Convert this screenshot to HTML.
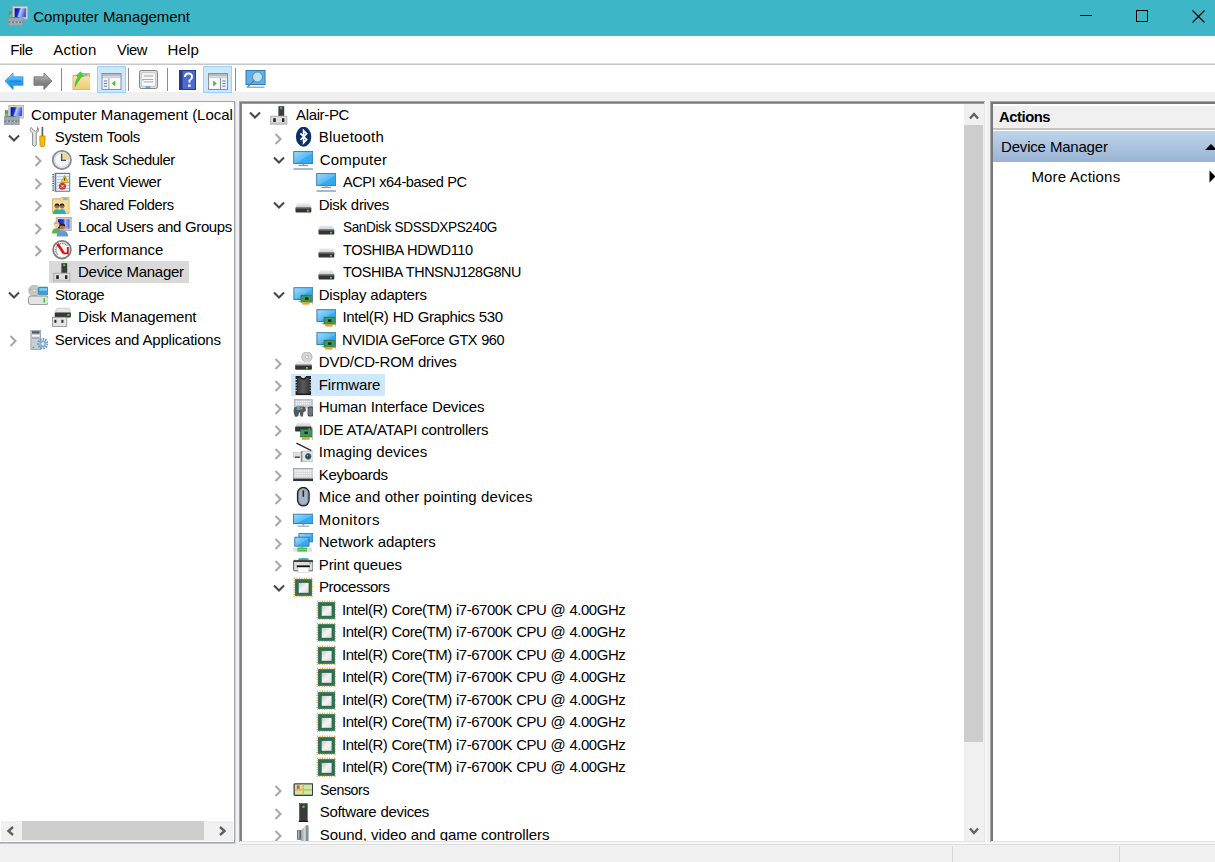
<!DOCTYPE html>
<html><head><meta charset="utf-8"><title>Computer Management</title>
<style>
html,body{margin:0;padding:0}
body{width:1215px;height:862px;overflow:hidden;position:relative;background:#f0f0f0;font-family:"Liberation Sans",sans-serif}
.a{position:absolute}
.t{position:absolute;font-size:15px;line-height:20px;white-space:nowrap;color:#000;font-family:"Liberation Sans",sans-serif}
.ic{position:absolute;overflow:visible}
.clip{position:absolute;overflow:hidden}
</style></head><body>
<svg width="0" height="0" style="position:absolute"><symbol id="i-cm" viewBox="0 0 20 20"><defs><linearGradient id="gcm" x1="0" y1="0" x2="1" y2="0.25"><stop offset="0" stop-color="#0008b0"/><stop offset="0.4" stop-color="#1830d8"/><stop offset="0.55" stop-color="#c0ccf8"/><stop offset="1" stop-color="#3858e8"/></linearGradient></defs>
<rect x="0.8" y="5.2" width="3.4" height="8" fill="#7c8486"/><rect x="1.3" y="8.6" width="2.4" height="2.2" fill="#50e050"/>
<rect x="4.8" y="0.4" width="15" height="12.6" fill="#dcd8c4" stroke="#b4b09c" stroke-width="0.8"/><rect x="6.6" y="2.2" width="11.5" height="9" fill="url(#gcm)"/>
<path d="M4 12.3 Q8 10.2 12 12.3" stroke="#303030" fill="none" stroke-width="1.2"/>
<rect x="0.2" y="11.8" width="15" height="8" fill="#9ca8b0" stroke="#86929a" stroke-width="0.6"/><rect x="0.6" y="15.4" width="14.2" height="1.6" fill="#6e7a82"/><path d="M2.5 16.2H14" stroke="#e8eef0" stroke-width="1" stroke-dasharray="1.4 2.2"/></symbol><symbol id="i-systools" viewBox="0 0 20 20"><path d="M3.2 0.4 C1.6 1.8 1.8 4.8 4.6 5.8 L4.6 18.2 Q6.4 20.2 8.2 18.2 L8.2 5.8 C11 4.8 11.2 1.8 9.6 0.4 L9.4 3.2 L7.4 4.4 L5.4 3.2Z" fill="#e6e6e6" stroke="#7c7c7c" stroke-width="0.9"/>
<rect x="13.6" y="0" width="1.6" height="9.5" fill="#5a5a5a"/><path d="M11.8 9 H17 V11.6 Q17.4 13 16.8 14 V18.2 Q16.8 19.8 14.4 19.8 Q12 19.8 12 18.2 V14 Q11.4 13 11.8 11.6Z" fill="#f4bc10" stroke="#c08800" stroke-width="0.8"/></symbol><symbol id="i-clock" viewBox="0 0 20 20"><circle cx="9.9" cy="10" r="9.1" fill="#eef2f6" stroke="#8c8c8c" stroke-width="1.8"/><circle cx="9.9" cy="10" r="7.2" fill="#f4f6fa" stroke="#c4ccd4" stroke-width="0.7"/><path d="M9.9 10 V2.8 A7.2 7.2 0 0 1 17.1 10Z" fill="#f0d490"/><path d="M9.6 3.8 V10.4 H14" stroke="#405068" stroke-width="1.3" fill="none"/></symbol><symbol id="i-event" viewBox="0 0 20 20"><rect x="2.6" y="0.8" width="15.6" height="19" fill="#5878b8"/><rect x="4.2" y="2" width="13" height="16.8" fill="#e8f0f8"/><path d="M4.5 4.5H17M4.5 7.5H17M4.5 10.5H17M4.5 13.5H17M4.5 16.5H17" stroke="#b8c8dc" stroke-width="0.9"/><path d="M1.2 2V19" stroke="#505050" stroke-width="1.6" stroke-dasharray="1 0.8"/><path d="M12.7 3.4 L16.6 10.6 H8.8Z" fill="#f4cc10" stroke="#b89000" stroke-width="0.6"/><rect x="12.2" y="5.6" width="1" height="3" fill="#333"/><circle cx="10.4" cy="14.2" r="3.5" fill="#d83030"/><path d="M9 12.8 L11.8 15.6 M11.8 12.8 L9 15.6" stroke="#fff" stroke-width="0.9"/></symbol><symbol id="i-shared" viewBox="0 0 20 20"><path d="M0.6 3.8 H8 L9.6 2.4 H17 V18.4 H0.6Z" fill="#f2d488" stroke="#c8a858" stroke-width="0.8"/><rect x="11" y="3.2" width="4.5" height="1.6" fill="#68b0e8"/><rect x="1.4" y="5.4" width="15" height="12.4" fill="#f6dc9c"/><circle cx="5" cy="11.2" r="2.4" fill="#a07050"/><path d="M2.6 11 Q2.6 8.4 5 8.4 Q7.4 8.4 7.4 11 Q5 9.6 2.6 11Z" fill="#1e1a18"/><path d="M1 19 Q1 14.2 5 14.2 Q9 14.2 9 19Z" fill="#40b070"/><circle cx="10" cy="11.2" r="2.4" fill="#a07050"/><path d="M7.6 11 Q7.6 8.4 10 8.4 Q12.4 8.4 12.4 11 Q10 9.6 7.6 11Z" fill="#1e1a18"/><path d="M6.2 19 Q6.2 14.2 10 14.2 Q13.8 14.2 13.8 19Z" fill="#30a8c8"/></symbol><symbol id="i-users" viewBox="0 0 20 20"><defs><linearGradient id="gus" x1="0" y1="0" x2="1" y2="0"><stop offset="0" stop-color="#0010c0"/><stop offset="0.5" stop-color="#3050e0"/><stop offset="0.6" stop-color="#b0c0f8"/><stop offset="1" stop-color="#4868e8"/></linearGradient></defs><rect x="4.2" y="0.4" width="15" height="13.2" fill="#d0ccc0" stroke="#a8a498" stroke-width="0.8"/><rect x="6" y="2.2" width="11.5" height="9.4" fill="url(#gus)"/><circle cx="4.6" cy="7.8" r="2.8" fill="#f0d0a8"/><path d="M1.8 7.6 Q1.8 4.6 4.6 4.6 Q7.4 4.6 7.4 7.6 Q4.6 6 1.8 7.6Z" fill="#d8b070"/><path d="M0 16.5 Q0 11.2 4.6 11.2 Q9.2 11.2 9.2 16.5Z" fill="#60b050"/><circle cx="10.4" cy="9.6" r="2.8" fill="#b07850"/><path d="M7.6 9.4 Q7.6 6.4 10.4 6.4 Q13.2 6.4 13.2 9.4 Q10.4 7.8 7.6 9.4Z" fill="#2a1a10"/><path d="M4.6 19.6 Q4.6 13.4 10.4 13.4 Q16.2 13.4 16.2 19.6Z" fill="#6898d0"/></symbol><symbol id="i-perf" viewBox="0 0 20 20"><circle cx="10" cy="9.7" r="8.8" fill="#f6f6f4" stroke="#7c7c7c" stroke-width="1.8"/><circle cx="10" cy="9.7" r="7.4" fill="#fbfbfa" stroke="#e0e0dc" stroke-width="0.6"/><path d="M5.6 14.6 A6 6 0 0 1 15.4 5.6" stroke="#5a8a6a" fill="none" stroke-width="1.4" stroke-dasharray="0.9 0.7"/><path d="M5.4 3.8 L11.8 13.2" stroke="#e81010" stroke-width="2.6"/><path d="M11.4 13.4 H15.8 V7" stroke="#d81010" stroke-width="1.9" fill="none"/></symbol><symbol id="i-devmgr" viewBox="0 0 20 20"><rect x="9.4" y="1.2" width="5.8" height="9.8" fill="#3c3c3c"/><rect x="11.2" y="2.2" width="2" height="2" fill="#38d848"/><rect x="1.8" y="11.2" width="16" height="9" fill="#dedede" stroke="#a6a6a6" stroke-width="0.9"/><rect x="2.4" y="17.6" width="14.8" height="2" fill="#c4c4c4"/><rect x="4.2" y="13.2" width="2.6" height="3.8" fill="#262626"/><rect x="13" y="13.2" width="2.4" height="3.8" fill="#262626"/></symbol><symbol id="i-storage" viewBox="0 0 20 20"><circle cx="6.3" cy="5.6" r="5.6" fill="#c8c8c8" stroke="#a0a0a0" stroke-width="0.6"/><circle cx="6.3" cy="5.6" r="1.5" fill="#fff" stroke="#888" stroke-width="0.5"/><rect x="1.5" y="3.8" width="1.6" height="1.4" fill="#60d060"/><rect x="10.2" y="2.1" width="10.2" height="7.7" rx="1.6" fill="#3aa0d8" stroke="#2070a8" stroke-width="0.6"/><rect x="11.5" y="3.2" width="7.5" height="2.4" fill="#8ad0f4"/><rect x="0.5" y="11" width="19.9" height="8.6" rx="2.4" fill="#e4e4e4" stroke="#8a8a8a" stroke-width="0.9"/><rect x="15.4" y="13" width="1.6" height="4.6" fill="#40d040"/></symbol><symbol id="i-diskmgmt" viewBox="0 0 20 20"><path d="M3.4 5.6 Q3.8 1.1 5.6 1.1 H16.4 Q18.2 1.1 18.6 5.6Z" fill="#e6e6e6" stroke="#b8b8b8" stroke-width="0.5"/><rect x="2.7" y="5.6" width="16.2" height="4.8" rx="0.8" fill="#383838"/><rect x="15.4" y="7" width="2" height="1.8" fill="#40e040"/><rect x="0.4" y="10.2" width="14.4" height="9.2" fill="#e4e4e4" stroke="#8a8a8a" stroke-width="0.8"/><rect x="2.4" y="12.8" width="2" height="3" fill="#2a2a2a"/><rect x="9.4" y="12.8" width="2" height="3" fill="#2a2a2a"/></symbol><symbol id="i-services" viewBox="0 0 20 20"><rect x="2.9" y="0.2" width="9.8" height="19.4" fill="#c8ced4" stroke="#8a9298" stroke-width="0.7"/><rect x="4" y="1.2" width="7.6" height="2.4" fill="#4a5a68"/><rect x="4" y="5" width="7.6" height="1.6" fill="#f4f6f8"/><rect x="4" y="7.6" width="7.6" height="1" fill="#8a98a4"/><rect x="4.5" y="16.6" width="1.8" height="1.8" fill="#40d040"/><circle cx="14.9" cy="13.7" r="4.6" fill="none" stroke="#6a98c8" stroke-width="2.4" stroke-dasharray="1.5 1.1"/><circle cx="14.9" cy="13.7" r="3.4" fill="#88b0d8"/><circle cx="14.9" cy="13.7" r="1.5" fill="#f0f4f8"/></symbol><symbol id="i-bt" viewBox="0 0 20 20"><ellipse cx="10.6" cy="9.7" rx="7.7" ry="10" fill="#0a3068"/><path d="M7.4 6.4 L13.6 12.6 L10.6 15.8 V3.6 L13.6 6.8 L7.4 13" stroke="#fff" stroke-width="1.7" fill="none" stroke-linejoin="miter"/></symbol><symbol id="i-monitor" viewBox="0 0 20 20"><defs><linearGradient id="gmon" x1="0" y1="0" x2="1" y2="1"><stop offset="0" stop-color="#a0dcfc"/><stop offset="0.55" stop-color="#58baf4"/><stop offset="0.56" stop-color="#3cacf2"/><stop offset="1" stop-color="#2ea4ee"/></linearGradient></defs><rect x="0.7" y="1.6" width="19.2" height="11.8" fill="url(#gmon)" stroke="#2e74a8" stroke-width="0.9"/><rect x="9.3" y="13.8" width="2" height="1.2" fill="#98a8b8"/><rect x="5.5" y="14.8" width="9.6" height="1.3" fill="#8898a8"/><rect x="0.3" y="18" width="20" height="2" rx="1" fill="#a8b8c8"/></symbol><symbol id="i-monitors" viewBox="0 0 20 20"><rect x="0.5" y="4.2" width="19.6" height="9.4" fill="url(#gmon)" stroke="#2e74a8" stroke-width="0.9"/><rect x="9.3" y="13.8" width="2" height="1.8" fill="#98a8b8"/><rect x="4.5" y="15.6" width="11.6" height="1.2" fill="#98a8b8"/></symbol><symbol id="i-disk" viewBox="0 0 20 20"><defs><linearGradient id="gdk" x1="0" y1="0" x2="0" y2="1"><stop offset="0" stop-color="#eef0f2"/><stop offset="1" stop-color="#c8ccd0"/></linearGradient></defs><path d="M2.8 12.8 Q3.4 8.3 5.2 8.3 H15.6 Q17.4 8.3 18 12.8Z" fill="url(#gdk)"/><rect x="2.5" y="12.6" width="15.8" height="5" rx="0.8" fill="#333"/><rect x="2.5" y="12.6" width="15.8" height="1" fill="#777"/><rect x="14" y="14.8" width="1.8" height="1.8" fill="#40e050"/></symbol><symbol id="i-display" viewBox="0 0 20 20"><rect x="0.9" y="2.7" width="19" height="11.8" fill="url(#gmon)" stroke="#2e74a8" stroke-width="0.9"/><rect x="8" y="10.2" width="11.4" height="6.9" fill="#3a9858" stroke="#246c3c" stroke-width="0.7"/><rect x="12" y="12.4" width="3.4" height="2.4" fill="#262626"/><rect x="9.2" y="17.1" width="7.3" height="2.5" fill="#f0a020"/><path d="M19.9 8V19.5" stroke="#909090" stroke-width="0.8"/><path d="M5.5 16.7H8" stroke="#7a8a9a" stroke-width="0.7"/></symbol><symbol id="i-dvd" viewBox="0 0 20 20"><circle cx="13.9" cy="5" r="5.2" fill="#d4d4d4" stroke="#a8a8a8" stroke-width="0.7"/><circle cx="13.9" cy="5" r="1.6" fill="#fafafa" stroke="#999" stroke-width="0.5"/><path d="M2.6 13 Q3.2 9.4 5 9.4 H16 Q17.8 9.4 18.4 13Z" fill="#e4e6e8"/><rect x="2.2" y="12.8" width="16.7" height="5" rx="0.8" fill="#333"/><rect x="2.2" y="12.8" width="16.7" height="1" fill="#777"/><rect x="13" y="15" width="1.8" height="1.8" fill="#40e050"/></symbol><symbol id="i-firmware" viewBox="0 0 20 20"><defs><linearGradient id="gfw" x1="0" y1="0" x2="1" y2="0"><stop offset="0" stop-color="#3a3a3a"/><stop offset="0.5" stop-color="#5a5a5a"/><stop offset="1" stop-color="#3a3a3a"/></linearGradient></defs><path d="M2.6 1 H7.4 Q10.3 5.4 13.2 1 H18 V20 H2.6Z" fill="#1e1e1e"/><path d="M4.2 2.6 H6.6 Q10.3 7.4 14 2.6 H16.4 V18.4 H4.2Z" fill="url(#gfw)"/><path d="M2 4.5H4M2 7.3H4M2 10.1H4M2 12.9H4M2 15.7H4M16.6 4.5H18.6M16.6 7.3H18.6M16.6 10.1H18.6M16.6 12.9H18.6M16.6 15.7H18.6" stroke="#c8c8c8" stroke-width="1"/></symbol><symbol id="i-hid" viewBox="0 0 20 20"><rect x="1.5" y="2.6" width="17.7" height="7.9" fill="#c8ccd0" stroke="#9aa0a6" stroke-width="0.6"/><path d="M3 4.6H17.6M3 6.8H17.6" stroke="#fff" stroke-width="1.2" stroke-dasharray="1.4 0.6"/><path d="M0.8 12.2 Q1.4 9.4 4.4 9.4 H10.8 Q12.6 9.4 12.8 12 V14.2 L10.6 15 L9.8 19.6 Q8 20 7.4 18.8 L6.8 15.4 H6 L5.4 18.8 Q4.2 20.2 2 19.6 Q0.2 16 0.8 12.2Z" fill="#4e5860"/><rect x="3.6" y="10" width="3.6" height="3" fill="#3aa4ee"/><rect x="7.6" y="10.6" width="1.8" height="2" fill="#e8a020"/><rect x="7.8" y="12" width="1.6" height="1.4" fill="#e04020"/><rect x="14.6" y="9.6" width="5.8" height="10" rx="2.2" fill="#3e464e"/><rect x="15.4" y="10.4" width="4.2" height="8.4" rx="1.8" fill="#6a7884"/></symbol><symbol id="i-ide" viewBox="0 0 20 20"><path d="M2.6 6.8 Q3.2 2.5 5 2.5 H15.8 Q17.6 2.5 18.2 6.8Z" fill="url(#gdk)"/><rect x="2.1" y="6.6" width="16.5" height="5" rx="0.8" fill="#333"/><rect x="7.6" y="9.4" width="11.3" height="7.6" fill="#3a9858" stroke="#246c3c" stroke-width="0.7"/><path d="M15 9.4 L16.2 7.8 L17.4 9.4Z" fill="#40e050"/><rect x="11.4" y="11.6" width="3.4" height="2.4" fill="#262626"/><rect x="9" y="17" width="7.6" height="2.8" fill="#f0a020"/><path d="M19.9 7.2V20" stroke="#909090" stroke-width="0.8"/></symbol><symbol id="i-imaging" viewBox="0 0 20 20"><path d="M3.4 1.2 L18.4 8.7" stroke="#2a2a2a" stroke-width="1.3"/><rect x="8.4" y="9.2" width="12" height="10.5" rx="0.8" fill="#e2e4e6" stroke="#a4a8ac" stroke-width="0.7"/><rect x="7.8" y="9" width="1.6" height="11" fill="#8a8e92"/><circle cx="15.2" cy="14.4" r="2.8" fill="#1a4858" stroke="#5a6a70" stroke-width="0.8"/><circle cx="14.6" cy="13.8" r="0.8" fill="#8ac8d8"/><rect x="0.6" y="10.7" width="7.4" height="4.4" fill="#dcdedf" stroke="#b0b4b8" stroke-width="0.5"/><rect x="1.8" y="14.6" width="5" height="1.2" fill="#2a2a2a"/></symbol><symbol id="i-keyboard" viewBox="0 0 20 20"><rect x="0.3" y="3.6" width="20" height="12.2" fill="#d0d4d8" stroke="#8a9298" stroke-width="0.7"/><path d="M2 6H18.6M2 8.4H18.6M2 10.8H18.6" stroke="#fafafa" stroke-width="1.3" stroke-dasharray="1.5 0.6"/><rect x="0.3" y="13.6" width="20" height="2.4" fill="#2e363c"/></symbol><symbol id="i-mouse" viewBox="0 0 20 20"><rect x="3.9" y="-0.1" width="12.8" height="19.6" rx="6.4" fill="#1e1e1e"/><rect x="5.1" y="1.1" width="10.4" height="17.2" rx="5.2" fill="#7e92a6"/><rect x="6.2" y="2.2" width="8.2" height="15" rx="4.1" fill="#a4b4c4"/><rect x="9.5" y="3.2" width="1.6" height="6.8" rx="0.8" fill="#2a2a2a"/></symbol><symbol id="i-network" viewBox="0 0 20 20"><rect x="5.9" y="1.6" width="14.2" height="8.2" fill="url(#gmon)" stroke="#2e74a8" stroke-width="0.9"/><rect x="1.8" y="5.2" width="14.2" height="9" fill="url(#gmon)" stroke="#2e74a8" stroke-width="0.9"/><rect x="0.3" y="15.6" width="18.7" height="4" fill="#e0e0e0"/><rect x="4.4" y="15.6" width="9.6" height="4" fill="#44c050"/><rect x="8.2" y="14.2" width="2" height="1.6" fill="#44c050"/><path d="M4.4 17.6H14" stroke="#8ae090" stroke-width="0.7"/></symbol><symbol id="i-printer" viewBox="0 0 20 20"><rect x="5.5" y="3.2" width="10" height="3.8" fill="#3aa0e8"/><rect x="9.2" y="3.2" width="2.2" height="3.8" fill="#30c040"/><rect x="0.6" y="5.4" width="19.4" height="10.4" rx="0.8" fill="#dcdcdc" stroke="#4a4a4a" stroke-width="0.9"/><rect x="0.6" y="5.4" width="19.4" height="1.6" fill="#3a3a3a"/><rect x="16.2" y="7.4" width="2" height="1.3" fill="#30d040"/><rect x="3.8" y="10.4" width="13" height="2" fill="#111"/><rect x="5" y="12.4" width="10.6" height="5.2" fill="#fff" stroke="#c8c8c8" stroke-width="0.6"/></symbol><symbol id="i-cpu" viewBox="0 0 20 20"><defs><linearGradient id="gcpu" x1="0" y1="0" x2="1" y2="1"><stop offset="0" stop-color="#c8c8c8"/><stop offset="0.5" stop-color="#f4f4f4"/><stop offset="1" stop-color="#dcdcdc"/></linearGradient></defs><rect x="1.2" y="1.2" width="18.6" height="18.6" fill="none" stroke="#e0a038" stroke-width="1.4" stroke-dasharray="0.9 1.5"/><rect x="1.9" y="2.2" width="17" height="16.6" fill="#2e6e4c"/><rect x="2.6" y="2.9" width="15.6" height="15.2" fill="none" stroke="#3a7c5a" stroke-width="0.8"/><rect x="5.7" y="5.9" width="9.9" height="9.9" fill="url(#gcpu)"/></symbol><symbol id="i-sensors" viewBox="0 0 20 20"><rect x="0.5" y="3.2" width="19.8" height="12.7" rx="1.4" fill="#3c3c3c"/><rect x="1.8" y="4.4" width="17.2" height="10.3" fill="#c8e8b0"/><path d="M1.8 9.9H19M10.2 4.4V14.7" stroke="#e8b838" stroke-width="1.6"/><rect x="3.8" y="5.4" width="2.8" height="3.4" fill="#e84848"/></symbol><symbol id="i-software" viewBox="0 0 20 20"><rect x="6.6" y="1.7" width="7.6" height="16.6" fill="#3a3a3a" stroke="#1e1e1e" stroke-width="0.5"/><rect x="9.4" y="3.6" width="2.2" height="2.2" fill="#38e048"/><path d="M5.4 19.9 Q5.6 18.2 7 18.2 H13.8 Q15.2 18.2 15.4 19.9Z" fill="#1a1a1a"/></symbol><symbol id="i-sound" viewBox="0 0 20 20"><defs><linearGradient id="gsnd" x1="0" y1="0" x2="1" y2="0"><stop offset="0" stop-color="#9aa0a6"/><stop offset="0.5" stop-color="#d8dadc"/><stop offset="1" stop-color="#a8aeb4"/></linearGradient></defs><path d="M8.3 5.1 L12.6 0.4 H15.4 V20 H8.3Z" fill="url(#gsnd)"/><rect x="12.8" y="0.4" width="2.6" height="19.6" fill="#8690a0"/><rect x="4.1" y="5.1" width="4.2" height="9.7" fill="#5a6672"/><rect x="5" y="5.6" width="1.4" height="8.6" fill="#a8b4c0"/></symbol>
<symbol id="tb-back" viewBox="0 0 20 20"><defs><linearGradient id="gback" x1="0" y1="0" x2="0" y2="1"><stop offset="0" stop-color="#8fd4ff"/><stop offset="0.5" stop-color="#2ea6f0"/><stop offset="1" stop-color="#1a7ad0"/></linearGradient></defs><path d="M0.5 9.5 L9 1 V5 H19.5 V14 H9 V18.5Z" fill="url(#gback)" stroke="#3a90d8" stroke-width="0.8" stroke-linejoin="round"/><path d="M5 9.8 H18" stroke="#0a78d8" stroke-width="2" opacity="0.6"/></symbol>
<symbol id="tb-fwd" viewBox="0 0 20 20"><defs><linearGradient id="gfwd" x1="0" y1="0" x2="0" y2="1"><stop offset="0" stop-color="#c8c8c8"/><stop offset="0.5" stop-color="#8a8a8a"/><stop offset="1" stop-color="#6a6a6a"/></linearGradient></defs><path d="M19.5 9.5 L11 1 V5 H0.5 V14 H11 V18.5Z" fill="url(#gfwd)" stroke="#6a6a6a" stroke-width="0.8" stroke-linejoin="round"/></symbol>
<symbol id="tb-up" viewBox="0 0 19 19"><defs><linearGradient id="gfold" x1="0" y1="0" x2="0" y2="1"><stop offset="0" stop-color="#f8e4a8"/><stop offset="1" stop-color="#f0cc70"/></linearGradient></defs><path d="M1 4.2 H9 L10 2.6 H17.6 V18.6 H1Z" fill="#e8c878" stroke="#c8a050" stroke-width="0.8"/><rect x="12" y="3.2" width="3.4" height="1.4" rx="0.7" fill="#5aa0e8"/><rect x="1.4" y="5.6" width="16.6" height="12.6" fill="url(#gfold)"/><path d="M3 15.5 Q3.5 9 6 6 L4.6 4.4 L8.6 0.8 L11.6 5.4 L9.4 5.8 Q6.8 9.5 3 15.5Z" fill="#48d040" stroke="#30a030" stroke-width="0.5"/></symbol>
<symbol id="tb-tree" viewBox="0 0 20 17"><rect x="0.6" y="0.6" width="18.8" height="15.8" fill="#f4f4f4" stroke="#8a9098" stroke-width="1.2"/><rect x="1.2" y="1.2" width="17.6" height="1.6" fill="#a8b0b8"/><rect x="1.2" y="3.4" width="17.6" height="1.8" fill="#c8ccd4"/><rect x="1.2" y="5.2" width="5.8" height="10.6" fill="#f0f2f6"/><rect x="7" y="5.2" width="1.1" height="10.6" fill="#8a9098"/><path d="M2.4 8H5.6M2.4 10.6H5.6M2.4 13.2H5.6" stroke="#4a80c8" stroke-width="1"/><rect x="8.1" y="5.2" width="10.7" height="10.6" fill="#fafafa"/><path d="M13.8 7.6 L10.2 10.6 L13.8 13.6Z" fill="#40c040"/></symbol>
<symbol id="tb-tree2" viewBox="0 0 20 17"><rect x="0.6" y="0.6" width="18.8" height="15.8" fill="#f4f4f4" stroke="#8a9098" stroke-width="1.2"/><rect x="1.2" y="1.2" width="17.6" height="1.6" fill="#a8b0b8"/><rect x="1.2" y="3.4" width="17.6" height="1.8" fill="#c8ccd4"/><rect x="13" y="5.2" width="5.8" height="10.6" fill="#f0f2f6"/><rect x="11.9" y="5.2" width="1.1" height="10.6" fill="#8a9098"/><path d="M14.4 8H17.6M14.4 10.6H17.6M14.4 13.2H17.6" stroke="#4a80c8" stroke-width="1"/><rect x="1.2" y="5.2" width="10.7" height="10.6" fill="#fafafa"/><path d="M5.2 7.6 L8.8 10.6 L5.2 13.6Z" fill="#40c040"/></symbol>
<symbol id="tb-prop" viewBox="0 0 20 20"><rect x="0.5" y="0.5" width="19" height="19" rx="2" fill="#e0e0e0" stroke="#7a7a7a"/><rect x="2.5" y="3" width="15" height="14" fill="#fafafa" stroke="#aaa" stroke-width="0.6"/><rect x="5" y="5" width="10" height="2.5" fill="#ccc"/><path d="M5 10H15M5 12.5H15" stroke="#999" stroke-width="0.9"/><rect x="3.5" y="9.5" width="1.5" height="1.5" fill="#4ab0f0"/><rect x="7" y="17" width="5" height="2" fill="#4ab0f0"/></symbol>
<symbol id="tb-help" viewBox="0 0 17 20"><rect x="0.5" y="0.5" width="16" height="19" fill="#4a6ad0" stroke="#2a3a90"/><rect x="0.5" y="0.5" width="3" height="19" fill="#2a3a8a"/><path d="M6 7 Q6 3.5 9.5 3.5 Q13 3.5 13 7 Q13 9 10.5 10.5 V12.5" stroke="#fff" stroke-width="2" fill="none"/><rect x="9.2" y="14.5" width="2.4" height="2.4" fill="#fff"/></symbol>
<symbol id="tb-mon" viewBox="0 0 20 20"><rect x="0.5" y="0.5" width="19" height="14" fill="#5ab0e8" stroke="#2e78b8"/><circle cx="12" cy="7" r="5" fill="#b8e0f8" stroke="#6a8aa0" stroke-width="1"/><path d="M8.5 10.5 L2 17" stroke="#6a7a88" stroke-width="1.6"/><rect x="1" y="16.5" width="18" height="1.5" fill="#98b0c4"/></symbol>
</svg>

<!-- title bar -->
<div class="a" style="left:0;top:0;width:1215px;height:36px;background:#3db6c8"></div>
<svg class="ic" style="left:8px;top:6px" width="20" height="20"><use href="#i-cm"/></svg>
<div class="a" style="left:1080px;top:15px;width:12px;height:1px;background:#000"></div>
<div class="a" style="left:1136px;top:10px;width:10px;height:10px;border:1px solid #000"></div>
<svg class="ic" style="left:1192px;top:10px" width="13" height="13"><path d="M0.5 0.5 L12.5 12.5 M12.5 0.5 L0.5 12.5" stroke="#000" stroke-width="1.1"/></svg>

<!-- menu -->
<div class="a" style="left:0;top:36px;width:1215px;height:27px;background:#fff"></div>
<div class="a" style="left:0;top:63px;width:1215px;height:1px;background:#e2e2e3"></div>
<div class="a" style="left:0;top:64px;width:1215px;height:1px;background:#c7c8ca"></div>
<!-- toolbar -->
<div class="a" style="left:0;top:65px;width:1215px;height:27px;background:#fff"></div>
<div class="a" style="left:97px;top:66px;width:27px;height:25px;background:#cce8ff;border:1px solid #99d1ff"></div>
<div class="a" style="left:203px;top:66px;width:27px;height:25px;background:#cce8ff;border:1px solid #99d1ff"></div>
<div class="a" style="left:61px;top:68px;width:1px;height:23px;background:#8c8c8c"></div>
<div class="a" style="left:128px;top:68px;width:1px;height:23px;background:#8c8c8c"></div>
<div class="a" style="left:167px;top:68px;width:1px;height:23px;background:#8c8c8c"></div>
<div class="a" style="left:235px;top:68px;width:1px;height:23px;background:#8c8c8c"></div>
<svg class="ic" style="left:4px;top:71.5px" width="20" height="19"><use href="#tb-back"/></svg>
<svg class="ic" style="left:33px;top:71.5px" width="20" height="19"><use href="#tb-fwd"/></svg>
<svg class="ic" style="left:72px;top:71px" width="19" height="19"><use href="#tb-up"/></svg>
<svg class="ic" style="left:101px;top:73px" width="21" height="17"><use href="#tb-tree"/></svg>
<svg class="ic" style="left:139px;top:70px" width="19" height="19"><use href="#tb-prop"/></svg>
<svg class="ic" style="left:179px;top:70px" width="17" height="20"><use href="#tb-help"/></svg>
<svg class="ic" style="left:208px;top:73px" width="20" height="17"><use href="#tb-tree2"/></svg>
<svg class="ic" style="left:245px;top:70px" width="21" height="20"><use href="#tb-mon"/></svg>

<!-- left panel -->
<div class="a" style="left:0;top:101px;width:235px;height:1px;background:#9ea4ad"></div>
<div class="a" style="left:234px;top:101px;width:1px;height:742px;background:#9ea4ad"></div>
<div class="a" style="left:0;top:842px;width:235px;height:1px;background:#9ea4ad"></div>
<div class="a" style="left:0;top:102px;width:234px;height:740px;background:#fff"></div>
<div class="a" style="left:49px;top:261px;width:140px;height:22px;background:#d9d9d9"></div>
<div class="clip" style="left:0;top:102px;width:233px;height:719px"><div class="a" style="left:0;top:-102px;width:1215px;height:862px"><svg class="ic" style="left:3.9px;top:104.8px" width="20" height="20"><use href="#i-cm"/></svg><svg class="ic" style="left:7.8px;top:133.8px" width="12" height="9" viewBox="0 0 12 9"><path d="M1 1.5 L6 6.5 L11 1.5" stroke="#484848" stroke-width="2.1" fill="none"/></svg><svg class="ic" style="left:27.6px;top:127.3px" width="20" height="20"><use href="#i-systools"/></svg><svg class="ic" style="left:33.5px;top:155.1px" width="9" height="12" viewBox="0 0 9 12"><path d="M1.5 1 L6.5 6 L1.5 11" stroke="#a8a8a8" stroke-width="2.1" fill="none"/></svg><svg class="ic" style="left:51.8px;top:149.8px" width="20" height="20"><use href="#i-clock"/></svg><svg class="ic" style="left:33.5px;top:177.6px" width="9" height="12" viewBox="0 0 9 12"><path d="M1.5 1 L6.5 6 L1.5 11" stroke="#a8a8a8" stroke-width="2.1" fill="none"/></svg><svg class="ic" style="left:51.8px;top:172.3px" width="20" height="20"><use href="#i-event"/></svg><svg class="ic" style="left:33.5px;top:200.1px" width="9" height="12" viewBox="0 0 9 12"><path d="M1.5 1 L6.5 6 L1.5 11" stroke="#a8a8a8" stroke-width="2.1" fill="none"/></svg><svg class="ic" style="left:51.8px;top:194.8px" width="20" height="20"><use href="#i-shared"/></svg><svg class="ic" style="left:33.5px;top:222.6px" width="9" height="12" viewBox="0 0 9 12"><path d="M1.5 1 L6.5 6 L1.5 11" stroke="#a8a8a8" stroke-width="2.1" fill="none"/></svg><svg class="ic" style="left:51.8px;top:217.3px" width="20" height="20"><use href="#i-users"/></svg><svg class="ic" style="left:33.5px;top:245.1px" width="9" height="12" viewBox="0 0 9 12"><path d="M1.5 1 L6.5 6 L1.5 11" stroke="#a8a8a8" stroke-width="2.1" fill="none"/></svg><svg class="ic" style="left:51.8px;top:239.8px" width="20" height="20"><use href="#i-perf"/></svg><svg class="ic" style="left:51.8px;top:262.3px" width="20" height="20"><use href="#i-devmgr"/></svg><svg class="ic" style="left:7.8px;top:291.3px" width="12" height="9" viewBox="0 0 12 9"><path d="M1 1.5 L6 6.5 L11 1.5" stroke="#484848" stroke-width="2.1" fill="none"/></svg><svg class="ic" style="left:27.6px;top:284.8px" width="20" height="20"><use href="#i-storage"/></svg><svg class="ic" style="left:51.8px;top:307.3px" width="20" height="20"><use href="#i-diskmgmt"/></svg><svg class="ic" style="left:9.3px;top:335.1px" width="9" height="12" viewBox="0 0 9 12"><path d="M1.5 1 L6.5 6 L1.5 11" stroke="#a8a8a8" stroke-width="2.1" fill="none"/></svg><svg class="ic" style="left:27.6px;top:329.8px" width="20" height="20"><use href="#i-services"/></svg><div class="t" style="left:31.10px;top:105px;letter-spacing:-0.038px;word-spacing:0.038px;font-weight:normal">Computer Management (Local</div><div class="t" style="left:54.80px;top:127px;letter-spacing:-0.349px;word-spacing:0.349px;font-weight:normal">System Tools</div><div class="t" style="left:79.00px;top:150px;letter-spacing:-0.450px;word-spacing:0.450px;font-weight:normal;transform:scaleX(0.9901);transform-origin:0 0">Task Scheduler</div><div class="t" style="left:78.00px;top:172px;letter-spacing:-0.450px;word-spacing:0.450px;font-weight:normal;transform:scaleX(0.9975);transform-origin:0 0">Event Viewer</div><div class="t" style="left:79.00px;top:195px;letter-spacing:-0.450px;word-spacing:0.450px;font-weight:normal;transform:scaleX(0.9788);transform-origin:0 0">Shared Folders</div><div class="t" style="left:78.00px;top:217px;letter-spacing:-0.419px;word-spacing:0.419px;font-weight:normal">Local Users and Groups</div><div class="t" style="left:78.00px;top:240px;letter-spacing:-0.053px;word-spacing:0.053px;font-weight:normal">Performance</div><div class="t" style="left:78.00px;top:262px;letter-spacing:-0.260px;word-spacing:0.260px;font-weight:normal">Device Manager</div><div class="t" style="left:54.80px;top:285px;letter-spacing:-0.450px;word-spacing:0.450px;font-weight:normal;transform:scaleX(0.9941);transform-origin:0 0">Storage</div><div class="t" style="left:78.00px;top:307px;letter-spacing:-0.186px;word-spacing:0.186px;font-weight:normal">Disk Management</div><div class="t" style="left:54.80px;top:330px;letter-spacing:-0.216px;word-spacing:0.216px;font-weight:normal">Services and Applications</div></div></div>
<div class="a" style="left:1px;top:821px;width:232px;height:20px;background:#f0f0f0"></div>
<div class="a" style="left:22px;top:821px;width:182px;height:19px;background:#cdcdcd"></div>
<svg class="ic" style="left:6px;top:826px" width="9" height="10"><path d="M7 1 L2.5 5 L7 9" stroke="#606060" stroke-width="2.4" fill="none"/></svg>
<svg class="ic" style="left:218px;top:826px" width="9" height="10"><path d="M2 1 L6.5 5 L2 9" stroke="#606060" stroke-width="2.4" fill="none"/></svg>

<!-- middle panel -->
<div class="a" style="left:239px;top:101px;width:747px;height:742px;background:#fff"></div>
<div class="a" style="left:239px;top:101px;width:746px;height:1px;background:#a6a6a6"></div>
<div class="a" style="left:240px;top:102px;width:745px;height:1px;background:#7c7c7c"></div>
<div class="a" style="left:241px;top:103px;width:744px;height:1px;background:#9a9a9a"></div>
<div class="a" style="left:239px;top:101px;width:1px;height:741px;background:#a6a6a6"></div>
<div class="a" style="left:240px;top:102px;width:1px;height:740px;background:#7c7c7c"></div>
<div class="a" style="left:241px;top:103px;width:1px;height:739px;background:#8a8a8a"></div>
<div class="a" style="left:240px;top:841px;width:745px;height:1px;background:#e3e3e3"></div>
<div class="a" style="left:984px;top:102px;width:1px;height:740px;background:#e3e3e3"></div>
<div class="a" style="left:291px;top:374px;width:94px;height:22px;background:#cce8ff"></div>
<div class="clip" style="left:242px;top:104px;width:722px;height:737px"><div class="a" style="left:-242px;top:-104px;width:1215px;height:862px"><svg class="ic" style="left:249.0px;top:111.3px" width="12" height="9" viewBox="0 0 12 9"><path d="M1 1.5 L6 6.5 L11 1.5" stroke="#484848" stroke-width="2.1" fill="none"/></svg><svg class="ic" style="left:268.8px;top:104.8px" width="20" height="20"><use href="#i-devmgr"/></svg><svg class="ic" style="left:274.3px;top:132.6px" width="9" height="12" viewBox="0 0 9 12"><path d="M1.5 1 L6.5 6 L1.5 11" stroke="#a8a8a8" stroke-width="2.1" fill="none"/></svg><svg class="ic" style="left:292.6px;top:127.3px" width="20" height="20"><use href="#i-bt"/></svg><svg class="ic" style="left:272.8px;top:156.3px" width="12" height="9" viewBox="0 0 12 9"><path d="M1 1.5 L6 6.5 L11 1.5" stroke="#484848" stroke-width="2.1" fill="none"/></svg><svg class="ic" style="left:292.6px;top:149.8px" width="20" height="20"><use href="#i-monitor"/></svg><svg class="ic" style="left:316.2px;top:172.3px" width="20" height="20"><use href="#i-monitor"/></svg><svg class="ic" style="left:272.8px;top:201.3px" width="12" height="9" viewBox="0 0 12 9"><path d="M1 1.5 L6 6.5 L11 1.5" stroke="#484848" stroke-width="2.1" fill="none"/></svg><svg class="ic" style="left:292.6px;top:194.8px" width="20" height="20"><use href="#i-disk"/></svg><svg class="ic" style="left:316.2px;top:217.3px" width="20" height="20"><use href="#i-disk"/></svg><svg class="ic" style="left:316.2px;top:239.8px" width="20" height="20"><use href="#i-disk"/></svg><svg class="ic" style="left:316.2px;top:262.3px" width="20" height="20"><use href="#i-disk"/></svg><svg class="ic" style="left:272.8px;top:291.3px" width="12" height="9" viewBox="0 0 12 9"><path d="M1 1.5 L6 6.5 L11 1.5" stroke="#484848" stroke-width="2.1" fill="none"/></svg><svg class="ic" style="left:292.6px;top:284.8px" width="20" height="20"><use href="#i-display"/></svg><svg class="ic" style="left:316.2px;top:307.3px" width="20" height="20"><use href="#i-display"/></svg><svg class="ic" style="left:316.2px;top:329.8px" width="20" height="20"><use href="#i-display"/></svg><svg class="ic" style="left:274.3px;top:357.6px" width="9" height="12" viewBox="0 0 9 12"><path d="M1.5 1 L6.5 6 L1.5 11" stroke="#a8a8a8" stroke-width="2.1" fill="none"/></svg><svg class="ic" style="left:292.6px;top:352.3px" width="20" height="20"><use href="#i-dvd"/></svg><svg class="ic" style="left:274.3px;top:380.1px" width="9" height="12" viewBox="0 0 9 12"><path d="M1.5 1 L6.5 6 L1.5 11" stroke="#a8a8a8" stroke-width="2.1" fill="none"/></svg><svg class="ic" style="left:292.6px;top:374.8px" width="20" height="20"><use href="#i-firmware"/></svg><svg class="ic" style="left:274.3px;top:402.6px" width="9" height="12" viewBox="0 0 9 12"><path d="M1.5 1 L6.5 6 L1.5 11" stroke="#a8a8a8" stroke-width="2.1" fill="none"/></svg><svg class="ic" style="left:292.6px;top:397.3px" width="20" height="20"><use href="#i-hid"/></svg><svg class="ic" style="left:274.3px;top:425.1px" width="9" height="12" viewBox="0 0 9 12"><path d="M1.5 1 L6.5 6 L1.5 11" stroke="#a8a8a8" stroke-width="2.1" fill="none"/></svg><svg class="ic" style="left:292.6px;top:419.8px" width="20" height="20"><use href="#i-ide"/></svg><svg class="ic" style="left:274.3px;top:447.6px" width="9" height="12" viewBox="0 0 9 12"><path d="M1.5 1 L6.5 6 L1.5 11" stroke="#a8a8a8" stroke-width="2.1" fill="none"/></svg><svg class="ic" style="left:292.6px;top:442.3px" width="20" height="20"><use href="#i-imaging"/></svg><svg class="ic" style="left:274.3px;top:470.1px" width="9" height="12" viewBox="0 0 9 12"><path d="M1.5 1 L6.5 6 L1.5 11" stroke="#a8a8a8" stroke-width="2.1" fill="none"/></svg><svg class="ic" style="left:292.6px;top:464.8px" width="20" height="20"><use href="#i-keyboard"/></svg><svg class="ic" style="left:274.3px;top:492.6px" width="9" height="12" viewBox="0 0 9 12"><path d="M1.5 1 L6.5 6 L1.5 11" stroke="#a8a8a8" stroke-width="2.1" fill="none"/></svg><svg class="ic" style="left:292.6px;top:487.3px" width="20" height="20"><use href="#i-mouse"/></svg><svg class="ic" style="left:274.3px;top:515.1px" width="9" height="12" viewBox="0 0 9 12"><path d="M1.5 1 L6.5 6 L1.5 11" stroke="#a8a8a8" stroke-width="2.1" fill="none"/></svg><svg class="ic" style="left:292.6px;top:509.8px" width="20" height="20"><use href="#i-monitors"/></svg><svg class="ic" style="left:274.3px;top:537.6px" width="9" height="12" viewBox="0 0 9 12"><path d="M1.5 1 L6.5 6 L1.5 11" stroke="#a8a8a8" stroke-width="2.1" fill="none"/></svg><svg class="ic" style="left:292.6px;top:532.3px" width="20" height="20"><use href="#i-network"/></svg><svg class="ic" style="left:274.3px;top:560.1px" width="9" height="12" viewBox="0 0 9 12"><path d="M1.5 1 L6.5 6 L1.5 11" stroke="#a8a8a8" stroke-width="2.1" fill="none"/></svg><svg class="ic" style="left:292.6px;top:554.8px" width="20" height="20"><use href="#i-printer"/></svg><svg class="ic" style="left:272.8px;top:583.8px" width="12" height="9" viewBox="0 0 12 9"><path d="M1 1.5 L6 6.5 L11 1.5" stroke="#484848" stroke-width="2.1" fill="none"/></svg><svg class="ic" style="left:292.6px;top:577.3px" width="20" height="20"><use href="#i-cpu"/></svg><svg class="ic" style="left:316.2px;top:599.8px" width="20" height="20"><use href="#i-cpu"/></svg><svg class="ic" style="left:316.2px;top:622.3px" width="20" height="20"><use href="#i-cpu"/></svg><svg class="ic" style="left:316.2px;top:644.8px" width="20" height="20"><use href="#i-cpu"/></svg><svg class="ic" style="left:316.2px;top:667.3px" width="20" height="20"><use href="#i-cpu"/></svg><svg class="ic" style="left:316.2px;top:689.8px" width="20" height="20"><use href="#i-cpu"/></svg><svg class="ic" style="left:316.2px;top:712.3px" width="20" height="20"><use href="#i-cpu"/></svg><svg class="ic" style="left:316.2px;top:734.8px" width="20" height="20"><use href="#i-cpu"/></svg><svg class="ic" style="left:316.2px;top:757.3px" width="20" height="20"><use href="#i-cpu"/></svg><svg class="ic" style="left:274.3px;top:785.1px" width="9" height="12" viewBox="0 0 9 12"><path d="M1.5 1 L6.5 6 L1.5 11" stroke="#a8a8a8" stroke-width="2.1" fill="none"/></svg><svg class="ic" style="left:292.6px;top:779.8px" width="20" height="20"><use href="#i-sensors"/></svg><svg class="ic" style="left:274.3px;top:807.6px" width="9" height="12" viewBox="0 0 9 12"><path d="M1.5 1 L6.5 6 L1.5 11" stroke="#a8a8a8" stroke-width="2.1" fill="none"/></svg><svg class="ic" style="left:292.6px;top:802.3px" width="20" height="20"><use href="#i-software"/></svg><svg class="ic" style="left:274.3px;top:830.1px" width="9" height="12" viewBox="0 0 9 12"><path d="M1.5 1 L6.5 6 L1.5 11" stroke="#a8a8a8" stroke-width="2.1" fill="none"/></svg><svg class="ic" style="left:292.6px;top:824.8px" width="20" height="20"><use href="#i-sound"/></svg><div class="t" style="left:296.00px;top:105px;letter-spacing:-0.350px;word-spacing:0.350px;font-weight:normal">Alair-PC</div><div class="t" style="left:318.80px;top:127px;letter-spacing:0.207px;word-spacing:0.000px;font-weight:normal">Bluetooth</div><div class="t" style="left:319.80px;top:150px;letter-spacing:0.191px;word-spacing:0.000px;font-weight:normal">Computer</div><div class="t" style="left:343.40px;top:172px;letter-spacing:-0.450px;word-spacing:0.450px;font-weight:normal;transform:scaleX(0.9703);transform-origin:0 0">ACPI x64-based PC</div><div class="t" style="left:318.80px;top:195px;letter-spacing:-0.316px;word-spacing:0.316px;font-weight:normal">Disk drives</div><div class="t" style="left:343.40px;top:217px;letter-spacing:-0.450px;word-spacing:0.450px;font-weight:normal;transform:scaleX(0.9066);transform-origin:0 0">SanDisk SDSSDXPS240G</div><div class="t" style="left:343.40px;top:240px;letter-spacing:-0.450px;word-spacing:0.450px;font-weight:normal;transform:scaleX(0.9738);transform-origin:0 0">TOSHIBA HDWD110</div><div class="t" style="left:343.40px;top:262px;letter-spacing:-0.450px;word-spacing:0.450px;font-weight:normal;transform:scaleX(0.9591);transform-origin:0 0">TOSHIBA THNSNJ128G8NU</div><div class="t" style="left:318.80px;top:285px;letter-spacing:-0.259px;word-spacing:0.259px;font-weight:normal">Display adapters</div><div class="t" style="left:342.40px;top:307px;letter-spacing:-0.387px;word-spacing:0.387px;font-weight:normal">Intel(R) HD Graphics 530</div><div class="t" style="left:342.43px;top:330px;letter-spacing:-0.450px;word-spacing:0.450px;font-weight:normal;transform:scaleX(0.9684);transform-origin:0 0">NVIDIA GeForce GTX 960</div><div class="t" style="left:318.80px;top:352px;letter-spacing:-0.245px;word-spacing:0.245px;font-weight:normal">DVD/CD-ROM drives</div><div class="t" style="left:318.80px;top:375px;letter-spacing:-0.136px;word-spacing:0.136px;font-weight:normal">Firmware</div><div class="t" style="left:318.80px;top:397px;letter-spacing:-0.135px;word-spacing:0.135px;font-weight:normal">Human Interface Devices</div><div class="t" style="left:318.80px;top:420px;letter-spacing:-0.189px;word-spacing:0.189px;font-weight:normal">IDE ATA/ATAPI controllers</div><div class="t" style="left:318.80px;top:442px;letter-spacing:0.001px;word-spacing:0.000px;font-weight:normal">Imaging devices</div><div class="t" style="left:318.80px;top:465px;letter-spacing:-0.326px;word-spacing:0.326px;font-weight:normal">Keyboards</div><div class="t" style="left:318.80px;top:487px;letter-spacing:0.090px;word-spacing:0.000px;font-weight:normal">Mice and other pointing devices</div><div class="t" style="left:318.80px;top:510px;letter-spacing:0.440px;word-spacing:0.000px;font-weight:normal">Monitors</div><div class="t" style="left:318.80px;top:532px;letter-spacing:-0.047px;word-spacing:0.047px;font-weight:normal">Network adapters</div><div class="t" style="left:318.80px;top:555px;letter-spacing:-0.092px;word-spacing:0.092px;font-weight:normal">Print queues</div><div class="t" style="left:318.80px;top:577px;letter-spacing:-0.450px;word-spacing:0.450px;font-weight:normal;transform:scaleX(0.9990);transform-origin:0 0">Processors</div><div class="t" style="left:342.40px;top:600px;letter-spacing:-0.450px;word-spacing:0.450px;font-weight:normal;transform:scaleX(0.9954);transform-origin:0 0">Intel(R) Core(TM) i7-6700K CPU @ 4.00GHz</div><div class="t" style="left:342.40px;top:622px;letter-spacing:-0.450px;word-spacing:0.450px;font-weight:normal;transform:scaleX(0.9954);transform-origin:0 0">Intel(R) Core(TM) i7-6700K CPU @ 4.00GHz</div><div class="t" style="left:342.40px;top:645px;letter-spacing:-0.450px;word-spacing:0.450px;font-weight:normal;transform:scaleX(0.9954);transform-origin:0 0">Intel(R) Core(TM) i7-6700K CPU @ 4.00GHz</div><div class="t" style="left:342.40px;top:667px;letter-spacing:-0.450px;word-spacing:0.450px;font-weight:normal;transform:scaleX(0.9954);transform-origin:0 0">Intel(R) Core(TM) i7-6700K CPU @ 4.00GHz</div><div class="t" style="left:342.40px;top:690px;letter-spacing:-0.450px;word-spacing:0.450px;font-weight:normal;transform:scaleX(0.9954);transform-origin:0 0">Intel(R) Core(TM) i7-6700K CPU @ 4.00GHz</div><div class="t" style="left:342.40px;top:712px;letter-spacing:-0.450px;word-spacing:0.450px;font-weight:normal;transform:scaleX(0.9954);transform-origin:0 0">Intel(R) Core(TM) i7-6700K CPU @ 4.00GHz</div><div class="t" style="left:342.40px;top:735px;letter-spacing:-0.450px;word-spacing:0.450px;font-weight:normal;transform:scaleX(0.9954);transform-origin:0 0">Intel(R) Core(TM) i7-6700K CPU @ 4.00GHz</div><div class="t" style="left:342.40px;top:757px;letter-spacing:-0.450px;word-spacing:0.450px;font-weight:normal;transform:scaleX(0.9954);transform-origin:0 0">Intel(R) Core(TM) i7-6700K CPU @ 4.00GHz</div><div class="t" style="left:319.80px;top:780px;letter-spacing:-0.450px;word-spacing:0.450px;font-weight:normal;transform:scaleX(0.9455);transform-origin:0 0">Sensors</div><div class="t" style="left:319.80px;top:802px;letter-spacing:-0.337px;word-spacing:0.337px;font-weight:normal">Software devices</div><div class="t" style="left:319.80px;top:825px;letter-spacing:-0.075px;word-spacing:0.075px;font-weight:normal">Sound, video and game controllers</div></div></div>
<div class="a" style="left:964px;top:104px;width:20px;height:737px;background:#f0f0f0"></div>
<div class="a" style="left:964px;top:125px;width:19px;height:617px;background:#cdcdcd"></div>
<svg class="ic" style="left:969px;top:111px" width="10" height="9"><path d="M1 7.5 L5 3 L9 7.5" stroke="#606060" stroke-width="2.4" fill="none"/></svg>
<svg class="ic" style="left:969px;top:827px" width="10" height="9"><path d="M1 1.5 L5 6 L9 1.5" stroke="#606060" stroke-width="2.4" fill="none"/></svg>

<!-- actions panel -->
<div class="a" style="left:990px;top:101px;width:225px;height:742px;background:#fff"></div>
<div class="a" style="left:990px;top:101px;width:225px;height:1px;background:#a8a8a8"></div>
<div class="a" style="left:991px;top:102px;width:224px;height:2px;background:#777"></div>
<div class="a" style="left:990px;top:101px;width:1px;height:741px;background:#a8a8a8"></div>
<div class="a" style="left:991px;top:102px;width:2px;height:740px;background:#777"></div>
<div class="a" style="left:993px;top:106px;width:222px;height:22px;background:#f0f0f0"></div>
<div class="a" style="left:993px;top:128px;width:222px;height:2px;background:#c4c4c4"></div>
<div class="a" style="left:993px;top:131px;width:222px;height:31px;background:linear-gradient(#bed4ec,#98b3d4)"></div>
<div class="a" style="left:991px;top:841px;width:224px;height:1px;background:#e3e3e3"></div>
<svg class="ic" style="left:1204px;top:143px" width="14" height="8"><path d="M1 7 L7 1 L13 7Z" fill="#000"/></svg>
<svg class="ic" style="left:1209px;top:170px" width="8" height="13"><path d="M0.5 0.5 L6.5 6.5 L0.5 12.5Z" fill="#000"/></svg>

<!-- status bar -->
<div class="a" style="left:0;top:843px;width:235px;height:1px;background:#c8ccd2"></div>
<div class="a" style="left:235px;top:102px;width:1px;height:742px;background:#d4d7db"></div>
<div class="a" style="left:239px;top:842px;width:976px;height:2px;background:#f7f7f7"></div>
<div class="a" style="left:239px;top:844px;width:976px;height:1px;background:#dedede"></div>
<div class="a" style="left:985px;top:101px;width:2px;height:742px;background:#f8f8f8"></div>
<div class="a" style="left:952px;top:846px;width:1px;height:16px;background:#d5d5d5"></div>
<div class="a" style="left:1119px;top:846px;width:1px;height:16px;background:#d5d5d5"></div>
<div class="t" style="left:33.30px;top:7px;letter-spacing:-0.054px;word-spacing:0.054px;font-weight:normal">Computer Management</div><div class="t" style="left:10.20px;top:40px;letter-spacing:-0.409px;word-spacing:0.409px;font-weight:normal">File</div><div class="t" style="left:53.20px;top:40px;letter-spacing:0.271px;word-spacing:0.000px;font-weight:normal">Action</div><div class="t" style="left:117.20px;top:40px;letter-spacing:-0.450px;word-spacing:0.450px;font-weight:normal;transform:scaleX(0.9852);transform-origin:0 0">View</div><div class="t" style="left:167.50px;top:40px;letter-spacing:0.131px;word-spacing:0.000px;font-weight:normal">Help</div><div class="t" style="left:999.40px;top:107px;letter-spacing:-0.450px;word-spacing:0.450px;font-weight:bold;transform:scaleX(0.9853);transform-origin:0 0">Actions</div><div class="t" style="left:1001.10px;top:137px;letter-spacing:-0.202px;word-spacing:0.202px;font-weight:normal">Device Manager</div><div class="t" style="left:1031.40px;top:167px;letter-spacing:0.187px;word-spacing:0.000px;font-weight:normal">More Actions</div>
</body></html>
